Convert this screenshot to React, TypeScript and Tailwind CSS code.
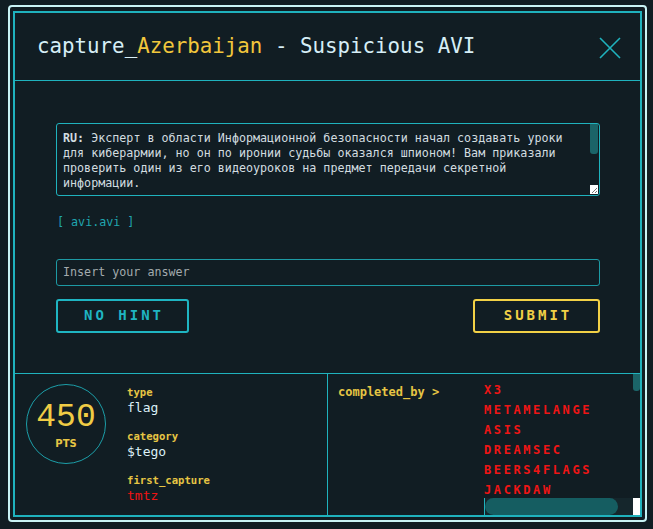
import { FC } from 'react';

const mono = "font-['DejaVu_Sans_Mono',monospace]";

const names = ['X3', 'METAMELANGE', 'ASIS', 'DREAMSEC', 'BEERS4FLAGS', 'JACKDAW'];

const Field: FC<{ label: string; value: string; red?: boolean; last?: boolean }> = ({ label, value, red, last }) => (
  <div className={last ? '' : 'mb-[12px]'}>
    <div className={`${mono} text-[10.6px] leading-[14px] font-bold text-[#e6c544]`}>{label}</div>
    <div className={`${mono} text-[13px] leading-[18px] ${red ? 'text-[#f01414]' : 'text-[#dcf1f8]'}`}>{value}</div>
  </div>
);

const App: FC = () => {
  return (
    <div className="min-h-[529px] bg-[#111d23] pt-[5px] pl-[8px]">
      <div className="w-[639px] h-[517px] border-2 border-[#c9f3f5] rounded-[4px] p-[3px] pt-[4px]">
        <div className="h-full border-2 border-[#1fb2bd] flex flex-col">
          {/* header */}
          <div className="h-[68px] flex items-center justify-between pl-[22px] pr-[19px] border-b border-[#1fb2bd]">
            <h1 className={`${mono} text-[20.8px] text-[#d6eef6]`}>
              capture_<span className="text-[#f2c73c]">Azerbaijan</span> - Suspicious AVI
            </h1>
            <svg width="22" height="22" viewBox="0 0 22 22" className="mt-[2px]">
              <path d="M1 1 L21 21 M21 1 L1 21" stroke="#1fb2bd" strokeWidth="1.6" />
            </svg>
          </div>

          {/* body */}
          <div className="pt-[42px] pl-[41px] pr-[40px] pb-[40px] border-b border-[#1fb2bd]">
            <div className="h-[73px] border border-[#1fb2bd] rounded-[3px] flex">
              <p className={`${mono} flex-1 text-[11.7px] leading-[15px] text-[#d3dde0] pl-[6px] pt-[7px] whitespace-pre-line`}>
                <span className="font-bold">RU:</span>
                {' Эксперт в области Информационной безопасности начал создавать уроки\nдля киберармии, но он по иронии судьбы оказался шпионом! Вам приказали\nпроверить один из его видеоуроков на предмет передачи секретной\nинформации.'}
              </p>
              <div className="w-[8px] flex flex-col justify-between mr-[1px]">
                <div className="h-[30px] bg-[#1b6468] rounded-b-[3px]" />
                <svg width="8" height="9" viewBox="0 0 8 9" className="mb-[1px]">
                  <rect width="8" height="9" fill="#ffffff" />
                  <path d="M7 3 L2 8 M7 6 L5 8" stroke="#777" strokeWidth="1" />
                </svg>
              </div>
            </div>

            <div className={`${mono} text-[11.7px] text-[#20a6b0] mt-[18px] ml-[1px]`}>[ avi.avi ]</div>

            <input
              className={`${mono} mt-[27px] w-full h-[27px] border border-[#1d9aa4] rounded-[3px] bg-transparent px-[6px] text-[11.7px] text-[#d3dde0] placeholder:text-[#a3abad] outline-none`}
              placeholder="Insert your answer"
            />

            <div className="mt-[13px] flex justify-between">
              <button className={`${mono} w-[133px] h-[34px] border-2 border-[#1fb5c2] rounded-[3px] text-[14px] font-bold tracking-[3px] pl-[3px] text-[#1fb5c2]`}>
                NO HINT
              </button>
              <button className={`${mono} w-[127px] h-[34px] border-2 border-[#f2d146] rounded-[3px] text-[14px] font-bold tracking-[3px] pl-[3px] text-[#f2d146]`}>
                SUBMIT
              </button>
            </div>
          </div>

          {/* footer */}
          <div className="flex-1 flex min-h-0">
            <div className="w-[313px] border-r border-[#1fb2bd] flex pl-[11px]">
              <div className="mt-[10px] w-[80px] h-[80px] rounded-full border border-[#1c9ea8] flex flex-col items-center justify-center">
                <div className="font-['Liberation_Mono',monospace] text-[33px] leading-[34px] text-[#f0cc45] mt-[4px]">450</div>
                <div className="font-['DejaVu_Sans',sans-serif] text-[10px] font-bold text-[#e6c544] mt-[1px]">PTS</div>
              </div>
              <div className="ml-[21px] pt-[11px]">
                <Field label="type" value="flag" />
                <Field label="category" value="$tego" />
                <Field label="first_capture" value="tmtz" red last />
              </div>
            </div>

            <div className="flex-1 flex min-w-0">
              <div className={`${mono} w-[156px] pl-[10px] pt-[11px] text-[12px] leading-[14px] font-bold text-[#e6c544]`}>
                completed_by &gt;
              </div>
              <div className="flex-1 flex flex-col min-w-0">
                <div className="flex-1 flex min-h-0">
                  <div className="flex-1 pt-[6px]">
                    {names.map((n) => (
                      <div key={n} className={`${mono} text-[12px] leading-[20px] font-bold tracking-[2.6px] text-[#ef1515] whitespace-nowrap`}>
                        {n}
                      </div>
                    ))}
                  </div>
                  <div className="w-[7px]">
                    <div className="h-[17px] bg-[#1b6468] rounded-b-[3px]" />
                  </div>
                </div>
                <div className="h-[17px] flex">
                  <div className="flex-1 bg-[#15262c] border-l border-[#1fb2bd] pr-[15px]">
                    <div className="h-full bg-[#155d61] rounded-full" />
                  </div>
                  <div className="w-[7px] bg-white" />
                </div>
              </div>
            </div>
          </div>
        </div>
      </div>
    </div>
  );
};

export default App;
